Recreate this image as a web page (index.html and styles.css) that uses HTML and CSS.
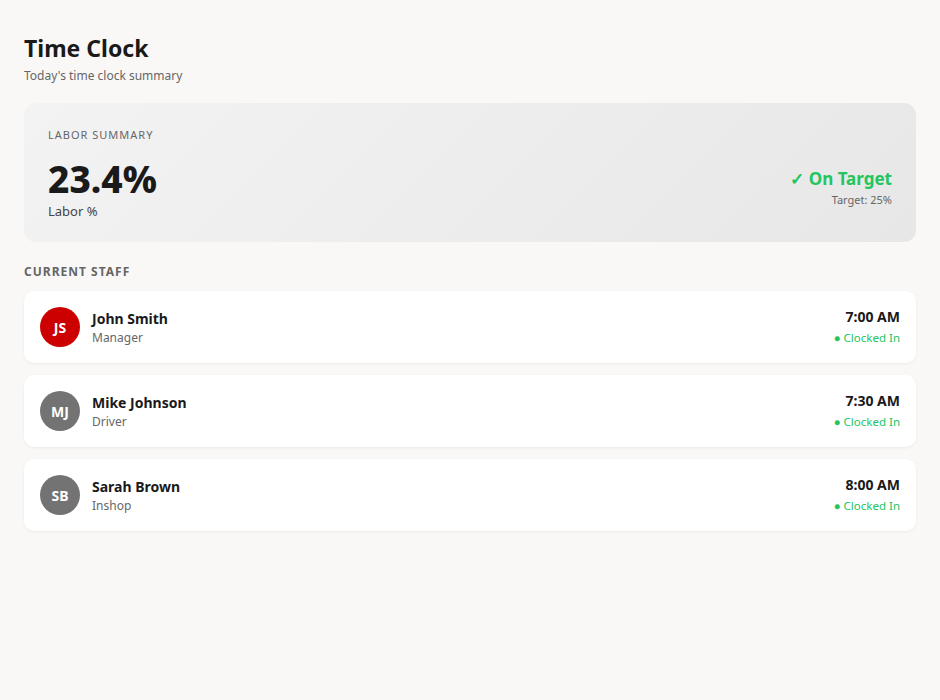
FILE: index.html
```html
<!DOCTYPE html>
<html>
<head>
<meta charset="utf-8">
<link rel="stylesheet" href="styles.css">
</head>
<body>
<div class="page">
  <header class="header">
    <h1 class="title">Time Clock</h1>
    <p class="subtitle">Today's time clock summary</p>
  </header>

  <section class="summary">
    <div class="summary-label">LABOR SUMMARY</div>
    <div class="summary-row">
      <div class="summary-left">
        <div class="summary-value">23.4%</div>
        <div class="summary-caption">Labor %</div>
      </div>
      <div class="summary-right">
        <div class="status-big">✓ On Target</div>
        <div class="target">Target: 25%</div>
      </div>
    </div>
  </section>

  <h2 class="section-title">CURRENT STAFF</h2>

  <div class="staff-list">
    <div class="staff-card">
      <div class="avatar avatar-red">JS</div>
      <div class="staff-info">
        <div class="staff-name">John Smith</div>
        <div class="staff-role">Manager</div>
      </div>
      <div class="staff-time">
        <div class="time">7:00 AM</div>
        <div class="clocked">● Clocked In</div>
      </div>
    </div>
    <div class="staff-card">
      <div class="avatar">MJ</div>
      <div class="staff-info">
        <div class="staff-name">Mike Johnson</div>
        <div class="staff-role">Driver</div>
      </div>
      <div class="staff-time">
        <div class="time">7:30 AM</div>
        <div class="clocked">● Clocked In</div>
      </div>
    </div>
    <div class="staff-card">
      <div class="avatar">SB</div>
      <div class="staff-info">
        <div class="staff-name">Sarah Brown</div>
        <div class="staff-role">Inshop</div>
      </div>
      <div class="staff-time">
        <div class="time">8:00 AM</div>
        <div class="clocked">● Clocked In</div>
      </div>
    </div>
  </div>
</div>
</body>
</html>
```

FILE: styles.css
```css
* { box-sizing: border-box; }
html, body { margin: 0; padding: 0; }
body {
  background: #f9f8f6;
  font-family: "Noto Sans", "Open Sans", sans-serif;
  color: #1a1a1a;
}
.page { padding: 24px; }
.header { margin-bottom: 18px; }
.title {
  margin: 8px 0 0;
  font-size: 23px;
  font-weight: 700;
  line-height: 32px;
}
.subtitle {
  margin: 3px 0 0;
  font-size: 12px;
  color: #666;
  line-height: 18px;
}
.summary {
  background: linear-gradient(135deg, #f3f3f3 0%, #e7e7e7 100%);
  border-radius: 12px;
  padding: 24px;
  height: 139px;
}
.summary-label {
  font-size: 11px;
  letter-spacing: 1px;
  color: #666;
  line-height: 16px;
}
.summary-row {
  display: flex;
  justify-content: space-between;
  align-items: center;
  margin-top: 14px;
}
.summary-value {
  font-size: 37px;
  font-weight: 800;
  line-height: 44px;
}
.summary-caption {
  font-size: 13px;
  color: #444;
  line-height: 18px;
  margin-top: 1px;
}
.summary-right { text-align: right; }
.status-big {
  font-size: 17px;
  font-weight: 700;
  color: #22c55e;
  line-height: 24px;
  margin-top: -2px;
}
.target {
  font-size: 11px;
  color: #666;
  line-height: 16px;
  margin-top: 1px;
}
.section-title {
  margin: 22px 0 11px;
  font-size: 12px;
  font-weight: 700;
  letter-spacing: 1px;
  color: #666;
  line-height: 16px;
}
.staff-list {
  display: flex;
  flex-direction: column;
  gap: 12px;
}
.staff-card {
  display: flex;
  align-items: center;
  background: #fff;
  border-radius: 10px;
  padding: 16px;
  height: 72px;
  box-shadow: 0 1px 3px rgba(0,0,0,0.06);
}
.avatar {
  width: 40px;
  height: 40px;
  border-radius: 50%;
  background: #737373;
  color: #fff;
  font-size: 14px;
  font-weight: 700;
  display: flex;
  align-items: center;
  justify-content: center;
  flex-shrink: 0;
}
.avatar-red { background: #cc0000; }
.staff-info { margin-left: 12px; margin-top: 2px; flex: 1; }
.staff-name {
  font-size: 14px;
  font-weight: 700;
  line-height: 18px;
}
.staff-role {
  margin-top: 2px;
  font-size: 12px;
  color: #666;
  line-height: 16px;
}
.staff-time { text-align: right; }
.time {
  font-size: 14px;
  font-weight: 700;
  line-height: 18px;
}
.clocked {
  margin-top: 4px;
  font-size: 11.5px;
  color: #22c55e;
  line-height: 16px;
}
```
